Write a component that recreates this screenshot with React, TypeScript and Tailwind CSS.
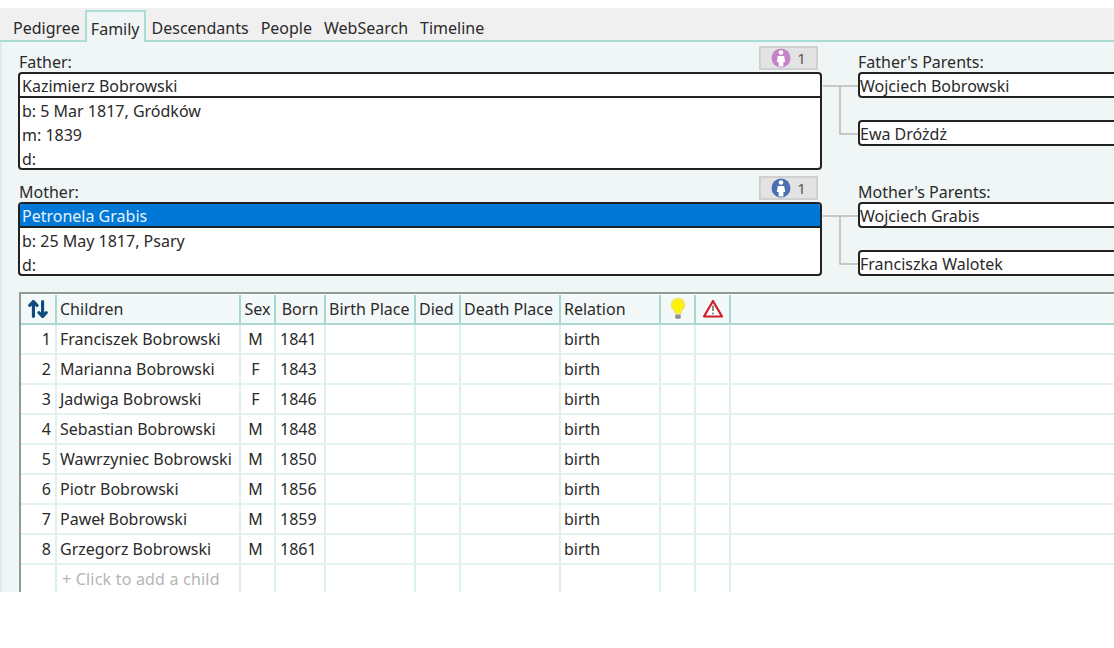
import * as React from "react";
import { ArrowUpDown } from "lucide-react";

const tabs = ["Pedigree", "Family", "Descendants", "People", "WebSearch", "Timeline"];

const children = [
  ["1", "Franciszek Bobrowski", "M", "1841"],
  ["2", "Marianna Bobrowski", "F", "1843"],
  ["3", "Jadwiga Bobrowski", "F", "1846"],
  ["4", "Sebastian Bobrowski", "M", "1848"],
  ["5", "Wawrzyniec Bobrowski", "M", "1850"],
  ["6", "Piotr Bobrowski", "M", "1856"],
  ["7", "Paweł Bobrowski", "M", "1859"],
  ["8", "Grzegorz Bobrowski", "M", "1861"],
];

const grid = "grid grid-cols-[36px_184px_35px_50px_90px_45px_100px_100px_35px_35px_1fr]";
const cell = "border-r-2 border-[#dff1ee] px-[3px] whitespace-nowrap";
const headCell = "border-r-2 border-[#a9d8d0] px-[3px] whitespace-nowrap";

const PersonBadge = ({ color }: { color: string }) => (
  <div className="flex h-6 w-[59px] items-center justify-center gap-[6px] border-2 border-[#d0d0d0] bg-[#e3e3e3] text-[15px] text-[#555]">
    <svg width="20" height="20" viewBox="0 0 20 20">
      <circle cx="10" cy="10" r="9.500" fill={color} />
      <circle cx="10" cy="4.500" r="2.300" fill="#fff" />
      <path d="M6.800 8h6.400l1 6h-1.800v4.500H7.600V14H5.800z" fill="#fff" />
    </svg>
    <span>1</span>
  </div>
);

const ParentBox = ({ name }: { name: string }) => (
  <div className="flex h-[26px] w-[300px] items-center rounded-l-[4px] border-2 border-[#222] bg-white pt-[1px] leading-none">
    {name}
  </div>
);

const Connector = () => (
  <svg width="36" height="74" viewBox="0 0 36 74" className="shrink-0">
    <path d="M1 14H36M18 14V62H36" fill="none" stroke="#b9b9b9" strokeWidth="1.500" />
  </svg>
);

const Couple = (props: {
  label: string;
  parentsLabel: string;
  name: string;
  lines: string[];
  badgeColor: string;
  selected?: boolean;
  father: string;
  mother: string;
}) => {
  const { label, parentsLabel, name, lines, badgeColor, selected, father, mother } = props;
  return (
    <div className="flex pl-[16px]">
      <div className="w-[804px] shrink-0">
        <div className="flex h-[26px] items-end justify-between pr-1">
          <span className="pl-[1px] leading-[19px]">{label}</span>
          <div className="mb-[2px]">
            <PersonBadge color={badgeColor} />
          </div>
        </div>
        <div className="overflow-hidden rounded-[4px] border-2 border-[#222] bg-white">
          <div
            className={
              selected
                ? "flex h-6 items-center border-b-2 border-[#222] bg-[#0078d7] pl-[2px] pt-[2px] text-[#e8f2fb]"
                : "flex h-6 items-center border-b-2 border-[#222] pl-[2px] pt-[1px]"
            }
          >
            {name}
          </div>
          {lines.map((line) => (
            <div key={line} className="h-6 pl-[2px] pt-[2px] leading-[22px] last:h-[22px]">
              {line}
            </div>
          ))}
        </div>
      </div>
      <div className="flex">
        <div className="pt-[26px]">
          <Connector />
        </div>
        <div>
          <div className="flex h-[26px] items-end leading-[20px]">{parentsLabel}</div>
          <div className="flex flex-col gap-[22px]">
            <ParentBox name={father} />
            <ParentBox name={mother} />
          </div>
        </div>
      </div>
    </div>
  );
};

const Bulb = () => (
  <svg width="18" height="24" viewBox="0 0 16 22">
    <path
      d="M8 1.500a5.800 5.800 0 0 0-3.600 10.400c.7.8 1 1.600 1 3.100h5.200c0-1.500.3-2.300 1-3.100A5.800 5.800 0 0 0 8 1.500z"
      fill="#fff200"
      stroke="#f1e66a"
      strokeWidth="1.600"
    />
    <rect x="5.500" y="16" width="5" height="4" rx="1" fill="#8f8f8f" />
  </svg>
);

const Warning = () => (
  <svg width="22" height="20" viewBox="0 0 22 20">
    <path d="M11 2 20 17.500H2z" fill="#fff" stroke="#cc1f28" strokeWidth="2.200" strokeLinejoin="round" />
    <path d="M11 6.500v5.500" stroke="#8a8a8a" strokeWidth="2" />
    <circle cx="11" cy="14.500" r="1.100" fill="#8a8a8a" />
  </svg>
);

const Row = (props: { values: string[] }) => {
  const [num, name, sex, born] = props.values;
  return (
    <div className={`${grid} h-[30px] items-stretch border-b-2 border-[#e3f3f0] leading-[28px]`}>
      <div className={`${cell} pr-1 text-right`}>{num}</div>
      <div className={cell}>{name}</div>
      <div className={`${cell} pr-[7px] text-center`}>{sex}</div>
      <div className={`${cell} pl-1`}>{born}</div>
      <div className={cell} />
      <div className={cell} />
      <div className={cell} />
      <div className={cell}>birth</div>
      <div className={cell} />
      <div className={cell} />
      <div />
    </div>
  );
};

export default function App() {
  return (
    <div className="h-[648px] w-[1114px] overflow-hidden bg-white pt-2 font-['Noto_Sans',sans-serif] text-[16px] text-[#2a2a2a]">
      <div className="flex h-[34px] items-end border-b-2 border-[#a9dcd2] bg-[#f0f0f0] pl-[7px]">
        {tabs.map((tab) =>
          tab === "Family" ? (
            <div
              key={tab}
              className="-mb-[2px] -ml-[1px] flex h-[32px] items-center border-2 border-b-0 border-[#a9dcd2] bg-[#f0f6f6] px-1 pt-[3px]"
            >
              {tab}
            </div>
          ) : (
            <div key={tab} className="flex h-[30px] items-center px-[6px] pt-[6px]">
              {tab}
            </div>
          )
        )}
      </div>

      <div className="h-[550px] overflow-hidden border-l-2 border-[#dcefec] bg-[#f0f6f6] pt-1">
        <Couple
          label="Father:"
          parentsLabel="Father's Parents:"
          name="Kazimierz Bobrowski"
          lines={["b: 5 Mar 1817, Gródków", "m: 1839", "d:"]}
          badgeColor="#c583c9"
          father="Wojciech Bobrowski"
          mother="Ewa Dróżdż"
        />
        <div className="mt-[6px]">
          <Couple
            label="Mother:"
            parentsLabel="Mother's Parents:"
            name="Petronela Grabis"
            lines={["b: 25 May 1817, Psary", "d:"]}
            badgeColor="#4a6fb3"
            selected
            father="Wojciech Grabis"
            mother="Franciszka Walotek"
          />
        </div>

        <div className="ml-[17px] mt-[16px] h-[300px] border-l-2 border-t-2 border-[#8c9c99] bg-white pt-[1px]">
          <div className={`${grid} h-[30px] items-stretch border-b-2 border-[#a9d8d0] bg-[#f3f9f9] leading-[28px]`}>
            <div className={`${headCell} flex items-center justify-center text-[#0d4a7e]`}>
              <ArrowUpDown size={22} strokeWidth={3.400} />
            </div>
            <div className={headCell}>Children</div>
            <div className={`${headCell} text-center`}>Sex</div>
            <div className={`${headCell} text-center`}>Born</div>
            <div className={headCell}>Birth Place</div>
            <div className={headCell}>Died</div>
            <div className={headCell}>Death Place</div>
            <div className={headCell}>Relation</div>
            <div className={`${headCell} flex items-center justify-center`}>
              <Bulb />
            </div>
            <div className={`${headCell} flex items-center justify-center`}>
              <Warning />
            </div>
            <div />
          </div>
          {children.map((child) => (
            <Row key={child[0]} values={child} />
          ))}
          <div className={`${grid} h-[30px] leading-[28px] text-[#b5b5b5]`}>
            <div className={cell} />
            <div className={`${cell} pl-[5px] tracking-[0.2px]`}>+ Click to add a child</div>
            <div className={cell} />
            <div className={cell} />
            <div className={cell} />
            <div className={cell} />
            <div className={cell} />
            <div className={cell} />
            <div className={cell} />
            <div className={cell} />
            <div />
          </div>
        </div>
      </div>
    </div>
  );
}
